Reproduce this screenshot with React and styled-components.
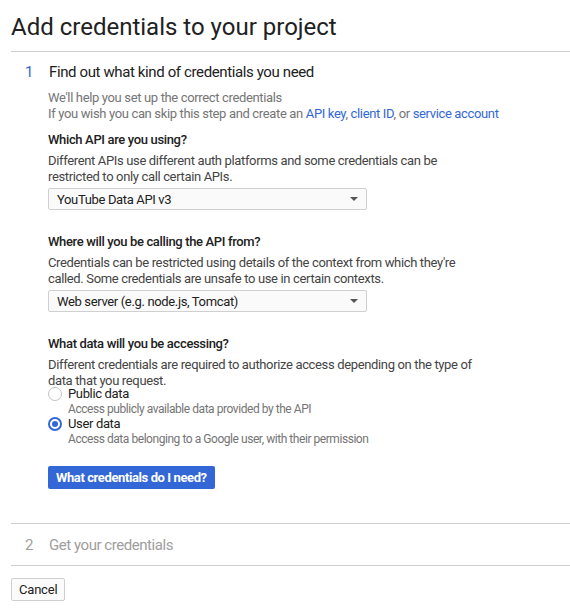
import React from "react";
import styled, { createGlobalStyle } from "styled-components";

const GlobalStyle = createGlobalStyle`
  body {
    margin: 0;
    background: #fff;
    font-family: Roboto, "Liberation Sans", Arial, sans-serif;
    letter-spacing: -0.35px;
    color: #212121;
  }
`;

const Page = styled.div`
  padding: 13px 0 0 11px;
`;

const Title = styled.h1`
  margin: 0 0 10px;
  font-size: 24px;
  line-height: 28px;
  font-weight: 400;
  letter-spacing: 0;
  color: #212121;
`;

const Step = styled.section`
  border-top: 1px solid #cfcfcf;
  ${p => p.last && "border-bottom: 1px solid #cfcfcf;"}
`;

const StepHeader = styled.div`
  display: flex;
  align-items: center;
  height: ${p => (p.collapsed ? "41px" : "auto")};
  padding: ${p => (p.collapsed ? "0 0 0 14px" : "10px 0 0 14px")};
  font-size: 15px;
  line-height: 20px;
  letter-spacing: ${p => (p.collapsed ? "-0.45px" : "-0.38px")};
  color: ${p => (p.collapsed ? "#9e9e9e" : "#212121")};
`;

const StepNumber = styled.span`
  width: 24px;
  color: ${p => (p.active ? "#3367d6" : "#9e9e9e")};
`;

const StepBody = styled.div`
  padding: 8px 0 34px 37px;
`;

const Intro = styled.p`
  margin: 0 0 10px;
  font-size: 13px;
  line-height: 16px;
  color: #757575;
`;

const Link = styled.a`
  color: #3367d6;
  text-decoration: none;
`;

const Field = styled.div`
  margin-bottom: 24px;
  &:last-of-type {
    margin-bottom: 0;
  }
`;

const Label = styled.div`
  margin-bottom: 5px;
  font-size: 13px;
  line-height: 16px;
  font-weight: 500;
  color: #212121;
`;

const Help = styled.p`
  margin: 0;
  width: 440px;
  font-size: 13px;
  line-height: 16px;
  color: #444;
`;

const Select = styled.div`
  box-sizing: border-box;
  display: flex;
  align-items: center;
  justify-content: space-between;
  width: 319px;
  height: 22px;
  margin-top: 3px;
  padding: 0 8px;
  border: 1px solid #d0d0d0;
  border-radius: 2px;
  background: #fafafa;
  font-size: 13px;
  color: #212121;
`;

const Caret = styled.span`
  width: 0;
  height: 0;
  border-left: 4px solid transparent;
  border-right: 4px solid transparent;
  border-top: 4px solid #555;
`;

const Options = styled.div`
  margin-top: -3px;
`;

const Option = styled.label`
  display: grid;
  grid-template-columns: 20px 1fr;
  font-size: 13px;
  line-height: 16px;
  color: #212121;
`;

const Radio = styled.span`
  box-sizing: border-box;
  align-self: center;
  width: 14px;
  height: 14px;
  border-radius: 50%;
  border: ${p => (p.checked ? "2px solid #3367d6" : "1px solid #c4c4c4")};
  display: flex;
  align-items: center;
  justify-content: center;
  &::after {
    content: "";
    display: ${p => (p.checked ? "block" : "none")};
    width: 6px;
    height: 6px;
    border-radius: 50%;
    background: #3367d6;
  }
`;

const OptionHint = styled.span`
  grid-column: 2;
  font-size: 12px;
  line-height: 14px;
  letter-spacing: -0.45px;
  color: #757575;
`;

const PrimaryButton = styled.button`
  margin-top: 20px;
  height: 23px;
  padding: 0 8px;
  border: none;
  border-radius: 2px;
  background: #3367d6;
  color: #fff;
  font-family: inherit;
  font-size: 13px;
  font-weight: 700;
  letter-spacing: -0.4px;
`;

const CancelButton = styled.button`
  margin-top: 12px;
  height: 23px;
  padding: 0 7px;
  border: 1px solid #cfcfcf;
  border-radius: 2px;
  background: #fbfbfb;
  color: #212121;
  font-family: inherit;
  font-size: 13px;
  letter-spacing: -0.2px;
`;

const fields = [
  {
    label: "Which API are you using?",
    help: "Different APIs use different auth platforms and some credentials can be restricted to only call certain APIs.",
    value: "YouTube Data API v3",
  },
  {
    label: "Where will you be calling the API from?",
    help: "Credentials can be restricted using details of the context from which they're called. Some credentials are unsafe to use in certain contexts.",
    value: "Web server (e.g. node.js, Tomcat)",
  },
];

const dataOptions = [
  { name: "Public data", hint: "Access publicly available data provided by the API", checked: false },
  { name: "User data", hint: "Access data belonging to a Google user, with their permission", checked: true },
];

export default function App() {
  return (
    <Page>
      <GlobalStyle />
      <Title>Add credentials to your project</Title>
      <Step>
        <StepHeader>
          <StepNumber active>1</StepNumber>
          Find out what kind of credentials you need
        </StepHeader>
        <StepBody>
          <Intro>
            We'll help you set up the correct credentials
            <br />
            If you wish you can skip this step and create an <Link>API key</Link>,{" "}
            <Link>client ID</Link>, or <Link>service account</Link>
          </Intro>
          {fields.map(f => (
            <Field key={f.label}>
              <Label>{f.label}</Label>
              <Help>{f.help}</Help>
              <Select>
                {f.value}
                <Caret />
              </Select>
            </Field>
          ))}
          <Field>
            <Label>What data will you be accessing?</Label>
            <Help>
              Different credentials are required to authorize access depending on the type of data that you request.
            </Help>
            <Options>
              {dataOptions.map(o => (
                <Option key={o.name}>
                  <Radio checked={o.checked} />
                  {o.name}
                  <OptionHint>{o.hint}</OptionHint>
                </Option>
              ))}
            </Options>
          </Field>
          <PrimaryButton>What credentials do I need?</PrimaryButton>
        </StepBody>
      </Step>
      <Step last>
        <StepHeader collapsed>
          <StepNumber>2</StepNumber>
          Get your credentials
        </StepHeader>
      </Step>
      <CancelButton>Cancel</CancelButton>
    </Page>
  );
}
